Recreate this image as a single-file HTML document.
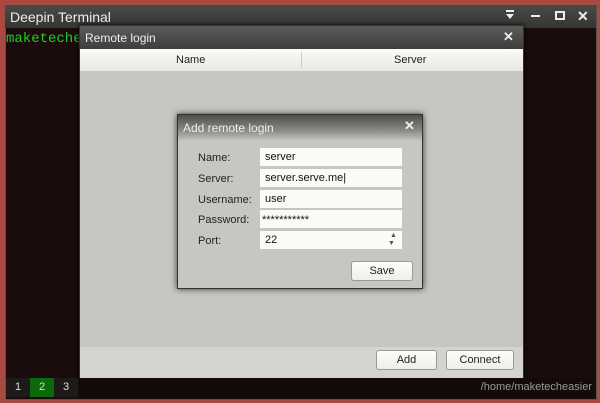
<!DOCTYPE html><html><head><style>
body{margin:0;width:600px;height:403px;background:#a94a42;font-family:"Liberation Sans",sans-serif;position:relative;overflow:hidden}
.a{position:absolute}
.win{left:5px;top:5px;width:590px;height:393px;background:#1a0c0c;border:1px solid #555}
.tb{left:5px;top:5px;width:591px;height:23px;background:linear-gradient(#4a4a48,#353533);color:#eee;font-size:14px}
.dlg{left:79px;top:25px;width:443px;height:352px;background:#c6c7c2;border:1px solid #333;box-shadow:0 0 4px #000}
.dt{left:0;top:0;width:443px;height:23px;background:linear-gradient(#5a5a58,#3e3e3c);color:#eee;font-size:12px}
.hd{left:0;top:23px;width:443px;height:22px;background:linear-gradient(#fafaf8,#e8e8e5);font-size:11px;color:#222}
.ft{left:0;top:321px;width:443px;height:31px;background:#d3d4cf}
.btn{background:linear-gradient(#fdfdfc,#eeeeeb);border:1px solid #999;border-radius:3px;font-size:11px;text-align:center;line-height:18px;color:#222}
.in{left:177px;top:114px;width:244px;height:173px;background:#c6c7c2;border:1px solid #333;box-shadow:0 0 6px #333}
.lb{font-size:11px;color:#222}
.fi{left:82px;width:142px;height:18px;background:#fafaf7;font-size:11px;line-height:18px;text-indent:5px;color:#111}
</style></head><body>
<div class="a win"></div>
<div class="a tb"><span class="a" style="left:5px;top:4px">Deepin Terminal</span>
<svg class="a" style="left:500px;top:5px" width="10" height="10"><rect x="1" y="0" width="8" height="2" fill="#eee"/><path d="M1 4h8l-4 5z" fill="#eee"/></svg>
<span class="a" style="left:526px;top:10px;width:9px;height:2px;background:#eee"></span>
<span class="a" style="left:550px;top:6px;width:6px;height:5px;border:2px solid #eee"></span>
<span class="a" style="left:572px;top:3px;font-weight:bold;font-size:14px">✕</span></div>
<div class="a" style="left:6px;top:31px;color:#2c2;font-family:'Liberation Mono',monospace;font-size:14px">maketeche</div>
<div class="a dlg">
<div class="a dt"><span class="a" style="left:5px;top:5px">Remote login</span><span class="a" style="left:423px;top:3px;font-weight:bold;font-size:13px">✕</span></div>
<div class="a hd"><span class="a" style="left:96px;top:5px">Name</span><span class="a" style="left:221px;top:3px;width:1px;height:16px;background:#ccc"></span><span class="a" style="left:314px;top:5px">Server</span></div>
<div class="a ft"></div>
<div class="a btn" style="left:296px;top:324px;width:59px">Add</div>
<div class="a btn" style="left:366px;top:324px;width:66px">Connect</div>
</div>
<div class="a in">
<div class="a" style="left:0;top:0;width:244px;height:26px;background:linear-gradient(#4e4e4c,#8a8b87 60%,#c6c7c2);color:#eee;font-size:12px"><span class="a" style="left:5px;top:6px">Add remote login</span><span class="a" style="left:226px;top:3px;font-weight:bold;font-size:13px">✕</span></div>
<span class="a lb" style="left:20px;top:37px">Name:</span><div class="a fi" style="top:33px">server</div>
<span class="a lb" style="left:20px;top:58px">Server:</span><div class="a fi" style="top:54px">server.serve.me|</div>
<span class="a lb" style="left:20px;top:79px">Username:</span><div class="a fi" style="top:75px">user</div>
<span class="a lb" style="left:20px;top:99px">Password:</span><div class="a fi" style="top:95px;font-size:11px;line-height:20px;text-indent:2px">***********</div>
<span class="a lb" style="left:20px;top:120px">Port:</span><div class="a fi" style="top:116px">22<span class="a" style="left:128px;top:1px;width:12px;height:16px;font-size:7px;line-height:8px;text-indent:2px;color:#555">▲<br>▼</span></div>
<div class="a btn" style="left:173px;top:146px;width:60px">Save</div>
</div>
<div class="a" style="left:6px;top:378px;width:588px;height:19px;background:#140a0a;font-size:11px;color:#ddd;line-height:19px">
<span class="a" style="left:0;width:24px;text-align:center;background:#1e1a1a">1</span>
<span class="a" style="left:24px;width:24px;text-align:center;background:#0a6a0a">2</span>
<span class="a" style="left:48px;width:24px;text-align:center;background:#1e1a1a">3</span>
<span class="a" style="right:2px;color:#999">/home/maketecheasier</span></div>
</body></html>
